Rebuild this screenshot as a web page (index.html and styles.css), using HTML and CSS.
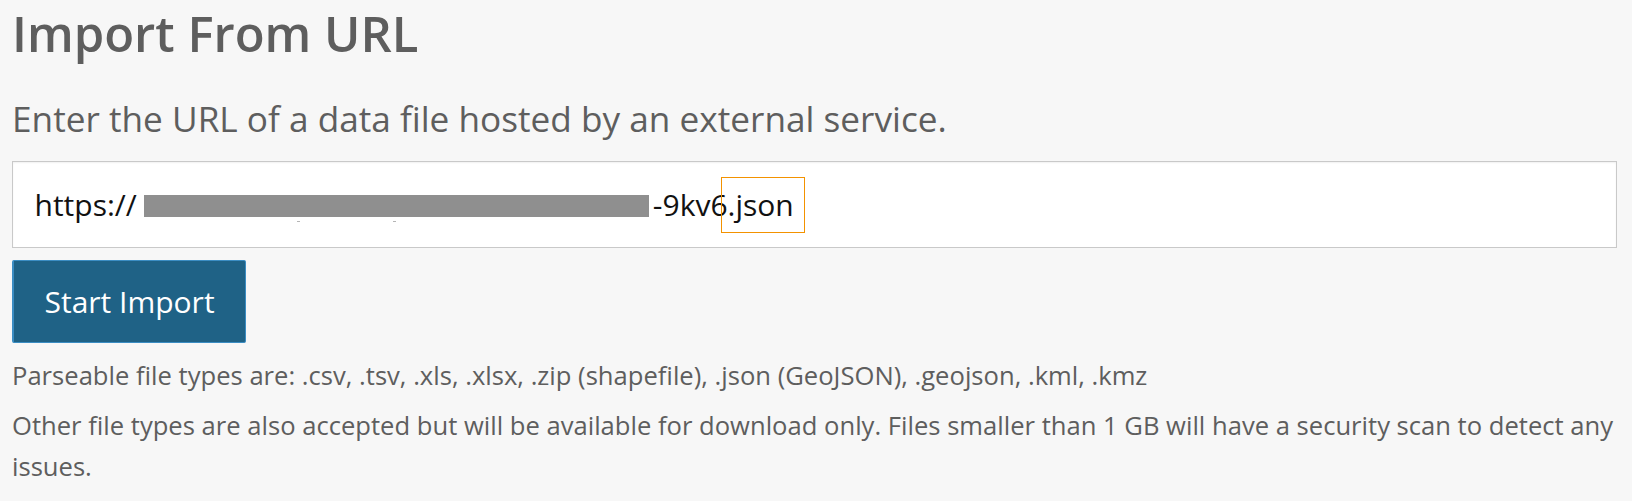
FILE: index.html
```html
<!DOCTYPE html>
<html lang="en">
<head>
<meta charset="utf-8">
<title>Import From URL</title>
<link rel="stylesheet" href="styles.css">
</head>
<body>
<main class="page">
  <h1 class="title">Import From URL</h1>
  <p class="lead">Enter the URL of a data file hosted by an external service.</p>
  <div class="url-field">
    <span class="url-text">https://</span>
    <span class="redact"><span class="speck s1"></span><span class="speck s2"></span></span>
    <span class="url-text">-9kv6</span><span class="url-text hl">.json</span>
  </div>
  <button class="btn" type="button">Start Import</button>
  <p class="note">Parseable file types are: .csv, .tsv, .xls, .xlsx, .zip (shapefile), .json (GeoJSON), .geojson, .kml, .kmz</p>
  <p class="note second">Other file types are also accepted but will be available for download only. Files smaller than 1 GB will have a security scan to detect any issues.</p>
</main>
</body>
</html>
```
FILE: styles.css
```css
html, body {
  margin: 0;
  padding: 0;
  background: #f7f7f7;
}

body {
  font-family: "Open Sans", "Liberation Sans", sans-serif;
  color: #5e5e5e;
}

.page {
  display: flex;
  flex-direction: column;
  align-items: flex-start;
  padding: 0 15px 0 12px;
}

.title {
  margin: 0;
  font-size: 49px;
  font-weight: 600;
  line-height: 66px;
  color: #5e5e5e;
}

.lead {
  margin: 28px 0 0;
  font-size: 35.2px;
  line-height: 48px;
}

.url-field {
  align-self: stretch;
  margin-top: 19px;
  box-sizing: border-box;
  height: 87px;
  display: flex;
  align-items: center;
  padding-left: 21.5px;
  background: #fff;
  border: 1px solid #c9c9c9;
  box-shadow: inset 0 1px 2px rgba(0, 0, 0, 0.06);
  font-size: 30px;
  color: #111;
  white-space: pre;
}

.url-text {
  line-height: 40px;
}

.redact {
  position: relative;
  width: 505px;
  height: 22.3px;
  margin: 3.3px 4px 0 7px;
  background: #8f8f8f;
}

.speck {
  position: absolute;
  top: 26px;
  width: 3px;
  height: 1px;
  background: #b5b5b5;
}

.s1 { left: 153px; }
.s2 { left: 249px; }

.hl {
  position: relative;
}

.hl::after {
  content: "";
  position: absolute;
  left: -7px;
  right: -11px;
  top: -8px;
  bottom: -8px;
  border: 1.5px solid #f39200;
}

.btn {
  margin-top: 12px;
  box-sizing: border-box;
  height: 83.3px;
  padding: 0 30.5px;
  background: #1f6286;
  border: 1px solid #3b8dc3;
  border-left-width: 2px;
  border-radius: 2px;
  font-family: "Open Sans", "Liberation Sans", sans-serif;
  font-size: 30px;
  color: #fff;
}

.note {
  margin: 12px 0 0;
  font-size: 25.6px;
  line-height: 41px;
}

.note.second {
  margin-top: 9px;
}
```
